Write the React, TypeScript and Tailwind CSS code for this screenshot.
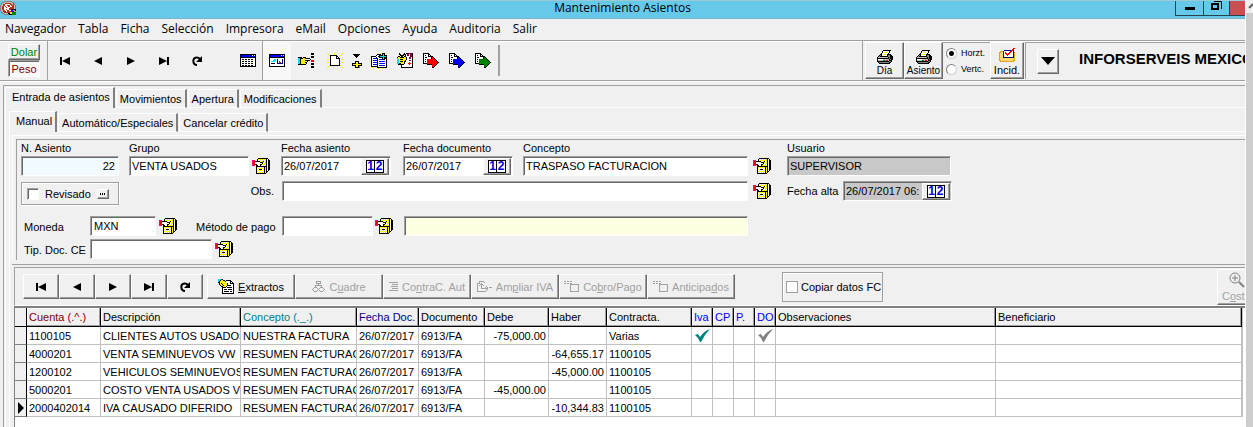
import React from 'react';

const raised = 'border border-t-white border-l-white border-r-[#696969] border-b-[#696969] shadow-[inset_-1px_-1px_0_#a0a0a0] bg-[#f0f0f0]';
const sunken = 'border border-t-[#a0a0a0] border-l-[#a0a0a0] border-r-white border-b-white shadow-[inset_1px_1px_0_#696969]';

const palette: Record<string, string> = {
  k: '#000000', w: '#ffffff', y: '#fff000', b: '#0000ff', n: '#000080', r: '#ff0000', g: '#008000',
  m: '#ff0080', c: '#00e0f0', s: '#808080', l: '#c0c0c0', p: '#800040', o: '#e0a020', t: '#008080',
  a: '#a0a0a0', e: '#b03018', h: '#ffd870',
};

// Draws a small bitmap, one letter of the palette for each pixel
const Bitmap: React.FC<{ rows: string[] }> = ({ rows }) => (
  <svg width={rows[0].length} height={rows.length} shapeRendering="crispEdges" className="shrink-0" aria-hidden="true">
    {rows.map((row, y) =>
      [...row].map((ch, x) => (palette[ch] ? <rect key={`${x}-${y}`} x={x} y={y} width="1" height="1" fill={palette[ch]} /> : null))
    )}
  </svg>
);

const cabinet = [
  '......kkkkkkkkkk..',
  '.....kywywywyykwk.',
  'mmm..kwywywywykwkk',
  'mrrkkkkkywykwykwkk',
  'mrrwwwwwkkkywykwkk',
  'mrrwwwwwwwkwyykwkk',
  'mrrkkwwwkkywywkwkk',
  'mmm.kkwwkywywykwkk',
  '....kkkkkkkkkkkwkk',
  '....kywywywykykwkk',
  '....kwywywywkykwkk',
  '....kywkkkwykykwkk',
  '....kwywywywkykwk.',
  '....kywywywykykk..',
  '....kwywywywkyk...',
  '....kkkkkkkkkk....',
];

const tableIcon = [
  'kkkkkkkkkkkkkkkk',
  'kbbbbbbbbbbbwbwk',
  'kbbbbbbbbbbbbbbk',
  'kkkkkkkkkkkkkkkk',
  'kwwwwwwwwwwwwwwk',
  'kwkkwkkwkkwkkwwk',
  'kwwwwwwwwwwwwwwk',
  'kwkkwkkwkkwkkwwk',
  'kwwwwwwwwwwwwwwk',
  'kwkkwkkwkkwkkwwk',
  'kwwwwwwwwwwwwwwk',
  'kwkkwkkwkkwkkwwk',
  'kkkkkkkkkkkkkkkk',
];

const formIcon = [
  'kkkkkkkkkkkkkkkk',
  'kbbbbbbbbbbbwbwk',
  'kbbbbbbbbbbbbbbk',
  'kkkkkkkkkkkkkkkk',
  'kwwwwwwwwwwwwwwk',
  'kwwwwccwnwwwwnwk',
  'kwwwcccwnwwwwnwk',
  'kwccccwwnwrwwnwk',
  'kwwwwwwwnwrrwnwk',
  'kwkkkkwwnnnnnnwk',
  'kwwwwwwwwwwwwwwk',
  'kwwwwwwwwwwwwwwk',
  'kkkkkkkkkkkkkkkk',
];

const handIcon = [
  '.............kkk',
  '.............kkk',
  '................',
  '.............kkk',
  'kkkk.kkk.....kkk',
  'cckkkyykkkkk....',
  'cckyyyywwwwwk...',
  'cckyyyykkkkk.rrr',
  'cckyyyyywk...rrr',
  'cckyyyykk.......',
  'cckyyyywk....kkk',
  'kkkkkkkk.....kkk',
  '................',
  '.............kkk',
  '.............kkk',
];

const newIcon = [
  'y......y.......y',
  '.y.....y......y.',
  '..ykkkkkkk...y..',
  '...kwwwwwkk.y...',
  '...kwwwwwkwk....',
  '...kwwwwwkkkk...',
  'yy.kwwwwwwwwk.yy',
  '...kwwwwwwwwk...',
  '...kwwwwwwwwk...',
  'yy.kwwwwwwwwk.yy',
  '...kwwwwwwwwk...',
  '...kwwwwwwwwk...',
  '..ykkkkkkkkkky..',
  '.y....y.......y.',
  'y.....y........y',
];

const insertIcon = [
  '.kkkkkkk..',
  '..kkkkk...',
  '...kkk....',
  '....k.....',
  '..........',
  '..........',
  '..........',
  '...kkkk...',
  '...kyyk...',
  'kkkkyykkkk',
  'kyyyyyyyyk',
  'kkkkyykkkk',
  '...kyyks..',
  '...kkkks..',
];

const copyIcon = [
  '.........y.kkk.y.',
  '......kkkkykck...',
  '.....kwwkkkkckkk.',
  'kkkkkwwkkcccccck.',
  'kwwwwkwwkkkkckkk.',
  'kwbbbbkwwwwkckkk.',
  'kwwwwwkwbbbkkkwky',
  'kwbbbbkwwwwwwwwk.',
  'kwwwwwkwbbbbbbwk.',
  'kwbbbbkwwwwwwwwky',
  'kwwwwwkwbbbbbbwk.',
  'kwbbbbkwwwwwwwwk.',
  'kwwwwwkwbbbbbbwky',
  'kkkkkkkwwwwwwwwk.',
  '.y..y.kkkkkkkkkk.',
  '..y....y...y..y..',
];

const wizardIcon = [
  '..k....k.kkppppk',
  '..kk..kkkwppwppk',
  '...kkkk.kwppwppk',
  '.kk.kk.kkwwwwppk',
  'kyykkkkyykwwppwk',
  'cyyyyyyyykwwppwk',
  'ccykkkyyykwwwwwk',
  'ccyyyyyykwwwppwk',
  'ccykkkykkwwwwwwk',
  'ccyyyyykwwwwrwwk',
  'cckkyyykwwwrrrwk',
  '.kkkkkkwwwwwrwwk',
  '....kwwwwwwwwwwk',
  '....kwwwwwwwwwwk',
  '....kkkkkkkkkkkk',
];

// The export icons share one page and differ only in the arrow's colour
const exportPage = [
  'kkkkkk..........',
  'kwwwwkk.........',
  'kwkwwkwk........',
  'kwwwwkkkkk......',
  'kwkkwwwwkXk.....',
  'kwwwwwwwkXXk....',
  'kwkwXXXXXXXXk...',
  'kwwwXXXXXXXXXk..',
  'kwkwXXXXXXXXXXk.',
  'kwwwXXXXXXXXXXXk',
  'kkkkXXXXXXXXXXk.',
  '....kkkkkXXXXk..',
  '.........XXXk...',
  '.........XXk....',
  '.........kk.....',
];
const exportIcon = (color: string) => exportPage.map(row => row.replaceAll('X', color));

const printerIcon = [
  '......kkkkkkkk..',
  '.....kwwwwwwk...',
  '.....kwyyywwk...',
  '....kwwwwwwk....',
  '...kkwyyywkkkk..',
  '..kskwwwwwksskk.',
  '.kskkkkkkkksskkk',
  'kllllllllllkskkk',
  'kkkkkkkkkkkkskkk',
  'kwwwwwllllllkskk',
  'klllllgglrrlkkk.',
  'kkkkkkkkkkkkssk.',
  '.ksssssssssskk..',
  '..kkkkkkkkkkk...',
];

const incidIcon = [
  '..............rr',
  '.............rr.',
  '.....nnnnnnnrrn.',
  '.oookwwwwwwrrwn.',
  'oohhnwrwwwrrwwno',
  'ohhhnwrrwrrwwwno',
  'ohhhnwwrrrwwwwno',
  'ohhhnwwwrwwwwwno',
  'ohhhnwwwwwwwwwno',
  'ohhhnnnnnnnnnnno',
  'ohhhhhhhhhhhhhho',
  'ohhhhhhhhhhhhhho',
  'oohhhhhhhhhhhhoo',
  '.oooooooooooooo.',
];

const extractIcon = [
  'ccckk...........',
  'cckyykk.kkkkk...',
  'ckyyyyykwwwwkk..',
  'kkyyyyyywwwwkwk.',
  '.kykyyyyykwwkkkk',
  '.kyykyyyykwwwwwk',
  '..kyykyyykkkkwwk',
  '...kkyyykwwwwwwk',
  '....kkkkwkkkkkwk',
  '....kwwwwwwwwwwk',
  '....kwkkkwkkkkwk',
  '....kwwwwwwwwwwk',
  '....kwkkkkkwkkwk',
  '....kwwwwwwwwwwk',
  '....kkkkkkkkkkkk',
];

const appIcon = [
  '....ssssssss....',
  '..ssllllllllss..',
  '.sllleeeeeelles.',
  '.sleewwwwweelss.',
  'slleewweeeweeels',
  'sleewewweewweels',
  'sleewwewwweeeels',
  'sleewwwwweeeeels',
  'sleewwewweennnkk',
  'slleewweewwbbook',
  '.sleeeweeeebbboo',
  '.ssleeeeeehhgggg',
  '..ssllllkkhhgggg',
  '....ssssskkkgggg',
];

const treeIcon = [
  '....aaaaa....', '....a...a....', '....aaaaa....', '......a......', '...aaaaaaa...', '...a.....a...',
  '..aaa...aaa..', '.a...a.a...a.', 'a.....a.....a', '.a...a.a...a.', '..aaa...aaa..',
];
const linesIcon = ['aaaaaaaaa', '.........', '...aaaaaa', '.........', '..aaaaaaa', '.........', '...aaaaaa', '.........', 'aaaaaaaaa'];
const expandIcon = [
  '..aaaaa........', '..a....a.......', 'aaa.a..........', 'a..aaa.........', 'a.a.a.a........', 'a...a....a.....',
  'a...a...a.a.aaa', 'a...aaaaaaa....', 'a.........a....', 'a........a.....', 'aaaaaaaaa......',
];
const boxIcon = [
  'aa.aa.aa.......', '...............', 'aa.aa.aa.......', '......aaaaaaaaa', '......a.......a', '......a.......a',
  '......a.......a', '......a.......a', '......a.......a', '......a.......a', '......aaaaaaaaa',
];

type Nav = 'first' | 'prev' | 'next' | 'last' | 'refresh';
const navItems: { kind: Nav; title: string }[] = [
  { kind: 'first', title: 'Primero' },
  { kind: 'prev', title: 'Anterior' },
  { kind: 'next', title: 'Siguiente' },
  { kind: 'last', title: 'Último' },
  { kind: 'refresh', title: 'Refrescar' },
];

const NavIcon: React.FC<{ kind: Nav }> = ({ kind }) => (
  <svg width="12" height="12" viewBox="0 0 12 12" aria-hidden="true">
    {kind === 'first' && <path d="M1 2h2v8H1zM11 2v8L3 6z" />}
    {kind === 'prev' && <path d="M10 2v8L2 6z" />}
    {kind === 'next' && <path d="M2 2v8l8-4z" />}
    {kind === 'last' && <path d="M9 2h2v8H9zM1 2v8l8-4z" />}
    {kind === 'refresh' && (
      <>
        <path d="M6 10C1.500 10 1 3 5.500 2.500Q7.500 2.300 9 4" fill="none" stroke="#000" strokeWidth="2" />
        <path d="M11 1v6H5z" />
      </>
    )}
  </svg>
);

const Lookup: React.FC<{ label: string }> = ({ label }) => (
  <button type="button" aria-label={`Buscar ${label}`} className="flex h-5 w-[18px] shrink-0 items-center"><Bitmap rows={cabinet} /></button>
);

const CalendarButton = () => (
  <button type="button" aria-label="Calendario" className={`flex h-[17px] w-7 shrink-0 items-center justify-center ${raised}`}>
    <span className="flex h-[13px] border border-black bg-white text-[12px] leading-[11px] font-bold text-[#0000e8]">
      <span className="w-2 border-r border-black">1</span>
      <span className="w-2">2</span>
    </span>
  </button>
);

interface FieldProps {
  id: string;
  label: string;
  value: string;
  box: string;
  input?: string;
  calendar?: boolean;
}

const Field: React.FC<FieldProps> = ({ id, label, value, box, input = 'bg-white', calendar }) => (
  <div className={`flex shrink-0 flex-col ${box}`}>
    <label htmlFor={id} className="h-4 leading-4 whitespace-nowrap">{label}</label>
    <div className={`flex h-5 items-center pr-px ${sunken} ${input}`}>
      <input id={id} defaultValue={value} className="h-full w-full min-w-0 bg-transparent px-0.5 outline-none [text-align:inherit]" />
      {calendar && <CalendarButton />}
    </div>
  </div>
);

const Tabs: React.FC<{ items: string[]; name: string }> = ({ items, name }) => (
  <div role="tablist" aria-label={name} className="flex h-[21px] items-end">
    {items.map((item, i) => (
      <button
        key={item}
        type="button"
        role="tab"
        aria-selected={i === 0}
        className={i === 0
          ? 'h-[21px] rounded-tl-xs border-t border-l border-r-2 border-t-white border-l-white border-r-[#808080] pr-[3px] pb-0.5 pl-1.5 whitespace-nowrap'
          : 'ml-px h-[19px] rounded-tl-xs border-t border-l border-r-2 border-b border-t-white border-b-white border-l-white border-r-[#808080] px-[3px] whitespace-nowrap'}
      >
        {item}
      </button>
    ))}
    <div className="h-px flex-1 bg-white" />
  </div>
);

const columns = [
  { label: 'Cuenta (.^.)', width: 'w-[74px]', color: 'text-[#800000]' },
  { label: 'Descripción', width: 'w-[140px]', color: 'text-black' },
  { label: 'Concepto (._.)', width: 'w-[116px]', color: 'text-[#008080]' },
  { label: 'Fecha Doc.', width: 'w-[62px]', color: 'text-[#000080]' },
  { label: 'Documento', width: 'w-[66px]', color: 'text-black' },
  { label: 'Debe', width: 'w-[64px]', color: 'text-black' },
  { label: 'Haber', width: 'w-[58px]', color: 'text-black' },
  { label: 'Contracta.', width: 'w-[85px]', color: 'text-black' },
  { label: 'Iva', width: 'w-[21px]', color: 'text-[#0000ff]' },
  { label: 'CP', width: 'w-[21px]', color: 'text-[#0000ff]' },
  { label: 'P.', width: 'w-[21px]', color: 'text-[#0000ff]' },
  { label: 'DO', width: 'w-[21px]', color: 'text-[#0000ff]' },
  { label: 'Observaciones', width: 'w-[220px]', color: 'text-black' },
  { label: 'Beneficiario', width: 'w-auto', color: 'text-black' },
];

const entries = [
  { account: '1100105', name: 'CLIENTES AUTOS USADOS', concept: 'NUESTRA FACTURA', debit: '-75,000.00', credit: '', contra: 'Varias', checked: true },
  { account: '4000201', name: 'VENTA SEMINUEVOS VW', concept: 'RESUMEN FACTURAC', debit: '', credit: '-64,655.17', contra: '1100105' },
  { account: '1200102', name: 'VEHICULOS SEMINUEVOS', concept: 'RESUMEN FACTURAC', debit: '', credit: '-45,000.00', contra: '1100105' },
  { account: '5000201', name: 'COSTO VENTA USADOS VW', concept: 'RESUMEN FACTURAC', debit: '-45,000.00', credit: '', contra: '1100105' },
  { account: '2000402014', name: 'IVA CAUSADO DIFERIDO', concept: 'RESUMEN FACTURAC', debit: '', credit: '-10,344.83', contra: '1100105' },
];

const Check: React.FC<{ color: string }> = ({ color }) => (
  <svg width="15" height="13" viewBox="0 0 15 13" className="mx-auto block" aria-label="Sí">
    <path d="M0 6l3-1 2 3Q9 2 15 0 10 5 6 13H5Q3 8 0 6z" fill={color} />
  </svg>
);

const actions = [
  { before: '', key: 'E', after: 'xtractos', icon: extractIcon, disabled: false },
  { before: 'C', key: 'u', after: 'adre', icon: treeIcon, disabled: true },
  { before: 'Co', key: 'n', after: 'traC. Aut', icon: linesIcon, disabled: true },
  { before: 'Am', key: 'p', after: 'liar IVA', icon: expandIcon, disabled: true },
  { before: 'Co', key: 'b', after: 'ro/Pago', icon: boxIcon, disabled: true },
  { before: 'Anticipa', key: 'd', after: 'os', icon: boxIcon, disabled: true },
];

const tools = [
  { title: 'Nuevo', icon: newIcon, box: 'w-4' },
  { title: 'Insertar', icon: insertIcon, box: 'w-[10px]' },
  { title: 'Copiar', icon: copyIcon, box: 'w-[17px]' },
  { title: 'Asistente', icon: wizardIcon, box: 'w-[17px]' },
  { title: 'Exportar rojo', icon: exportIcon('r'), box: 'w-[17px]' },
  { title: 'Exportar azul', icon: exportIcon('b'), box: 'w-[17px]' },
  { title: 'Exportar verde', icon: exportIcon('g'), box: 'w-[17px]' },
];

const menu = ['Navegador', 'Tabla', 'Ficha', 'Selección', 'Impresora', 'eMail', 'Opciones', 'Ayuda', 'Auditoria', 'Salir'];

const TitleBar = () => (
  <header className="flex h-[19px] items-start border-t border-b border-t-[#9cc8d8] border-b-[#7fb4c8] bg-[#66c9ea]">
    <div className="w-[70px]"><Bitmap rows={appIcon} /></div>
    <h1 className="flex-1 text-center font-['Open_Sans','Noto_Sans',sans-serif] text-[12px] leading-[14px]">Mantenimiento Asientos</h1>
    <div className="flex h-[15px] w-[70px] border-b border-l border-[#24414c]">
      <button type="button" aria-label="Minimizar" className="flex w-7 items-center justify-center border-r border-[#24414c]"><span className="h-[3px] w-[10px] bg-black" /></button>
      <button type="button" aria-label="Restaurar" className="flex w-[26px] items-start justify-center border-r border-[#24414c]">
        <svg width="11" height="10" fill="none" stroke="#000" aria-hidden="true"><path d="M1 3h6v5H1z" strokeWidth="2" /><path d="M3 .5h7.500V8" /></svg>
      </button>
      <button type="button" aria-label="Cerrar" className="flex-1 bg-[#c75050]" />
    </div>
  </header>
);

const Toolbar = () => (
  <div className="flex h-[41px] items-stretch border-t border-b border-[#a0a0a0] shadow-[inset_0_1px_0_#fff,0_1px_0_#fff]">
    <div className="ml-2 flex w-8 flex-col pt-[3px]">
      <button type="button" className={`h-4 text-[11px] leading-[14px] text-[#008000] ${raised}`}>Dolar</button>
      <button type="button" className={`h-[17px] bg-[#f8f8f8] text-[11px] leading-4 text-[#800000] ${sunken}`}>Peso</button>
    </div>
    <div className="ml-[7px] flex items-center border-l border-[#a0a0a0]">
      {navItems.map(item => (
        <button key={item.kind} type="button" title={item.title} className="flex h-8 w-[33px] items-center justify-center"><NavIcon kind={item.kind} /></button>
      ))}
    </div>
    <div className="ml-[27px] flex items-center">
      <button type="button" title="Lista"><Bitmap rows={tableIcon} /></button>
      <button type="button" title="Ficha" className="ml-1.5 flex h-full w-[29px] items-center justify-center border-l border-[#a0a0a0] bg-[#f8f8f8]"><Bitmap rows={formIcon} /></button>
      <button type="button" title="Ir a" className="ml-[7px]"><Bitmap rows={handIcon} /></button>
    </div>
    <div className="my-1 ml-[13px] flex items-center gap-[9px] border-r-2 border-[#a0a0a0] pr-1.5">
      {tools.map(tool => <button key={tool.title} type="button" title={tool.title} className={tool.box}><Bitmap rows={tool.icon} /></button>)}
    </div>
    <div className="ml-auto flex shrink-0 border-l border-[#a0a0a0] py-px pl-0.5">
      <button type="button" className={`flex w-[39px] flex-col items-center justify-end ${raised}`}><Bitmap rows={printerIcon} /><span className="h-[14px] text-[10px] leading-[14px]">Día</span></button>
      <button type="button" className={`flex w-[39px] flex-col items-center justify-end ${raised}`}><Bitmap rows={printerIcon} /><span className="h-[14px] text-[10px] leading-[14px]">Asiento</span></button>
      <div className="flex w-[47px] flex-col justify-center gap-0.5 border-t border-[#a0a0a0] pl-[3px] text-[9px] leading-[14px]">
        {['Horzt.', 'Vertc.'].map((name, i) => (
          <label key={name} className="flex items-center gap-1 whitespace-nowrap">
            <input
              type="radio"
              name="orientation"
              defaultChecked={i === 0}
              className="h-[11px] w-[11px] shrink-0 appearance-none rounded-full border border-[#808080] border-r-[#d0d0d0] border-b-[#d0d0d0] bg-white checked:bg-[radial-gradient(circle,#000_2px,#fff_3px)]"
            />
            {name}
          </label>
        ))}
      </div>
      <button type="button" className={`flex w-[34px] flex-col items-center justify-end ${raised}`}><Bitmap rows={incidIcon} /><span className="h-4 text-[11px] leading-4">Incid.</span></button>
      <div className="ml-px flex w-[220px] items-center overflow-hidden border-t border-l border-[#a0a0a0] pl-[11px]">
        <button type="button" aria-label="Cambiar empresa" className={`flex h-[25px] w-[22px] shrink-0 items-center justify-center ${raised}`}>
          <svg width="14" height="8" aria-hidden="true"><path d="M0 0h14L7 8z" /></svg>
        </button>
        <span className="ml-5 pb-1 text-[15px] font-bold whitespace-nowrap">INFORSERVEIS MEXICO</span>
      </div>
    </div>
  </div>
);

const EntryForm = () => (
  <form className="flex flex-col border-t border-l border-t-[#a0a0a0] border-l-[#a0a0a0] pb-px">
    <div className="flex items-end pl-1">
      <Field id="entry" label="N. Asiento" value="22" box="w-[98px]" input="bg-[#f0faff] text-right" />
      <Field id="group" label="Grupo" value="VENTA USADOS" box="ml-[10px] w-[120px]" />
      <div className="ml-[3px] w-7"><Lookup label="grupo" /></div>
      <Field id="entry-date" label="Fecha asiento" value="26/07/2017" box="ml-px w-[110px]" calendar />
      <Field id="doc-date" label="Fecha documento" value="26/07/2017" box="ml-3 w-[110px]" calendar />
      <Field id="concept" label="Concepto" value="TRASPASO FACTURACION" box="ml-[10px] w-[225px]" />
      <div className="ml-[5px] w-[34px]"><Lookup label="concepto" /></div>
      <Field id="user" label="Usuario" value="SUPERVISOR" box="w-[164px]" input="bg-[#c8c8c8]" />
    </div>
    <div className="mt-[5px] flex h-6 items-start pl-1">
      <div className="mt-px flex h-[23px] w-[98px] items-center border border-[#a0a0a0] pl-[5px] shadow-[1px_1px_0_#fff,inset_1px_1px_0_#fff]">
        <input id="reviewed" type="checkbox" className={`h-3 w-3 appearance-none bg-white ${sunken}`} />
        <label htmlFor="reviewed" className="ml-[6px]">Revisado</label>
        <button type="button" aria-label="Más" className={`ml-[6px] flex h-[10px] w-3 items-center justify-center gap-px ${raised}`}>
          <span className="h-0.5 w-px bg-black" /><span className="h-0.5 w-px bg-black" /><span className="h-0.5 w-px bg-black" />
        </button>
      </div>
      <label htmlFor="notes" className="w-[163px] pr-2 text-right leading-5">Obs.</label>
      <input id="notes" className={`h-5 w-[466px] bg-white px-[3px] outline-none ${sunken}`} />
      <div className="ml-[5px] w-[34px]"><Lookup label="observaciones" /></div>
      <label htmlFor="created" className="w-14 leading-5 whitespace-nowrap">Fecha alta</label>
      <div className={`flex h-5 w-[109px] items-center bg-[#c8c8c8] pr-px ${sunken}`}>
        <input id="created" defaultValue="26/07/2017 06:" className="h-full w-full min-w-0 bg-transparent pl-0.5 outline-none" />
        <CalendarButton />
      </div>
    </div>
    <div className="mt-[11px] flex h-5 items-start pl-[7px]">
      <label htmlFor="currency" className="w-[66px] leading-[22px]">Moneda</label>
      <input id="currency" defaultValue="MXN" className={`h-5 w-[66px] bg-white px-[3px] outline-none ${sunken}`} />
      <div className="ml-[3px] w-[37px]"><Lookup label="moneda" /></div>
      <label htmlFor="payment" className="w-[86px] leading-[22px] whitespace-nowrap">Método de pago</label>
      <input id="payment" className={`h-5 w-[91px] bg-white px-[3px] outline-none ${sunken}`} />
      <div className="ml-0.5 w-[29px]"><Lookup label="método de pago" /></div>
      <input aria-label="Descripción del método de pago" className={`h-5 w-[344px] bg-[#ffffe1] px-[3px] outline-none ${sunken}`} />
    </div>
    <div className="mt-[3px] flex h-5 items-start pl-[7px]">
      <label htmlFor="doc-type" className="w-[66px] leading-[22px] whitespace-nowrap">Tip. Doc. CE</label>
      <input id="doc-type" className={`h-5 w-[122px] bg-white px-[3px] outline-none ${sunken}`} />
      <div className="ml-[3px]"><Lookup label="tipo de documento" /></div>
    </div>
  </form>
);

const LinesToolbar = () => (
  <div className="flex h-[39px] items-center border-t border-l border-b border-t-[#a0a0a0] border-b-white border-l-[#a0a0a0] pl-2">
    <div className="flex">
      {navItems.map(item => (
        <button key={item.kind} type="button" title={item.title} className={`flex h-[25px] w-9 items-center justify-center ${raised}`}><NavIcon kind={item.kind} /></button>
      ))}
    </div>
    <div className="ml-1 flex">
      {actions.map(action => (
        <button
          key={action.before + action.after}
          type="button"
          disabled={action.disabled}
          className={`flex h-[25px] w-[88px] items-center justify-center gap-1 overflow-hidden whitespace-nowrap disabled:text-[#a0a0a0] ${raised}`}
        >
          <Bitmap rows={action.icon} />
          <span>{action.before}<u>{action.key}</u>{action.after}</span>
        </button>
      ))}
    </div>
    <label className="ml-[47px] flex h-[30px] w-[101px] items-center gap-[3px] border border-[#a0a0a0] pl-[3px] whitespace-nowrap shadow-[inset_1px_1px_0_#fff]">
      <input type="checkbox" className="h-3 w-3 shrink-0 appearance-none border border-[#a0a0a0] bg-white" />
      Copiar datos FC
    </label>
    <div className="ml-auto h-9 w-7 overflow-hidden">
      <button type="button" disabled className={`flex h-9 w-10 flex-col items-start pl-1 text-[#a0a0a0] ${raised}`}>
        <svg width="20" height="18" fill="none" stroke="#808080" className="ml-1.5" aria-hidden="true"><circle cx="7" cy="8" r="5" /><path d="M7 5v6M4 8h6" /><path d="M11 12l5 5" strokeWidth="2" /></svg>
        <span className="leading-4">C<u>o</u>st</span>
      </button>
    </div>
  </div>
);

const cell = 'h-[18px] overflow-hidden border-r border-b border-[#c0c0c0] px-0.5 text-clip whitespace-nowrap';

const LinesTable = () => (
  <div className="flex-1 border-t-2 border-l border-t-[#808080] border-l-[#808080] bg-white pr-0.5">
    <table className="w-full table-fixed border-separate border-spacing-0 border-r border-[#c0c0c0] text-left">
      <thead>
        <tr className="bg-[#f0f0f0]">
          <th aria-label="Fila" className="h-[19px] w-3 border-r border-b border-black p-0" />
          {columns.map(col => (
            <th key={col.label} className={`h-[19px] overflow-hidden border-r border-b border-black p-0 pl-0.5 font-normal whitespace-nowrap shadow-[inset_-1px_-1px_0_#a0a0a0,inset_1px_1px_0_#fff] ${col.width} ${col.color}`}>{col.label}</th>
          ))}
        </tr>
      </thead>
      <tbody>
        {entries.map((row, i) => (
          <tr key={row.account}>
            <td className="h-[18px] border-r border-b border-r-black border-b-[#808080] bg-[#f0f0f0] p-0">
              {i === entries.length - 1 && <svg width="8" height="12" className="ml-0.5 block" aria-hidden="true"><path d="M1 0l6 6-6 6z" /></svg>}
            </td>
            <td className={cell}>{row.account}</td>
            <td className={cell}>{row.name}</td>
            <td className={cell}>{row.concept}</td>
            <td className={cell}>26/07/2017</td>
            <td className={cell}>6913/FA</td>
            <td className={`${cell} text-right`}>{row.debit}</td>
            <td className={`${cell} text-right`}>{row.credit}</td>
            <td className={cell}>{row.contra}</td>
            <td className={cell}>{row.checked && <Check color="#008080" />}</td>
            <td className={cell} />
            <td className={cell} />
            <td className={cell}>{row.checked && <Check color="#808080" />}</td>
            <td className={cell} />
            <td className={cell} />
          </tr>
        ))}
      </tbody>
    </table>
  </div>
);

export default function App() {
  return (
    <div className="flex min-h-screen w-full overflow-hidden bg-[#f0f0f0] font-['Liberation_Sans',Arial,sans-serif] text-[11px] leading-4 text-black">
      <div className="flex min-w-0 flex-1 flex-col overflow-hidden">
        <TitleBar />
        <nav className="flex h-[21px] items-center gap-3 pb-0.5 pl-[5px] font-['Open_Sans','Noto_Sans',sans-serif] text-[12px]">
          {menu.map(item => <button key={item} type="button">{item}</button>)}
        </nav>
        <Toolbar />
        <main className="mt-1 ml-[3px] flex flex-1 flex-col border-t border-l border-[#a0a0a0] pt-px pl-px">
          <Tabs name="Secciones" items={['Entrada de asientos', 'Movimientos', 'Apertura', 'Modificaciones']} />
          <section className="flex flex-1 flex-col border-l border-white pt-[3px] pl-[3px]">
            <Tabs name="Tipo de entrada" items={['Manual', 'Automático/Especiales', 'Cancelar crédito']} />
            <div className="flex flex-1 flex-col border-l border-white pt-[3px] pl-[2px]">
              <div className="border-t border-l border-white pt-[3px] pl-[3px]"><EntryForm /></div>
              <div className="mt-1 flex flex-1 flex-col border-t border-[#a0a0a0] pt-0.5 pl-0.5">
                <LinesToolbar />
                <LinesTable />
              </div>
            </div>
          </section>
        </main>
      </div>
      <div className="flex w-2 shrink-0 flex-col border-l border-white">
        <svg width="7" height="13" fill="none" stroke="#606060" aria-hidden="true"><path d="M3 8l4-4" strokeWidth="2" /></svg>
        <div className="flex-1 bg-[#cdcdcd]" />
      </div>
    </div>
  );
}
